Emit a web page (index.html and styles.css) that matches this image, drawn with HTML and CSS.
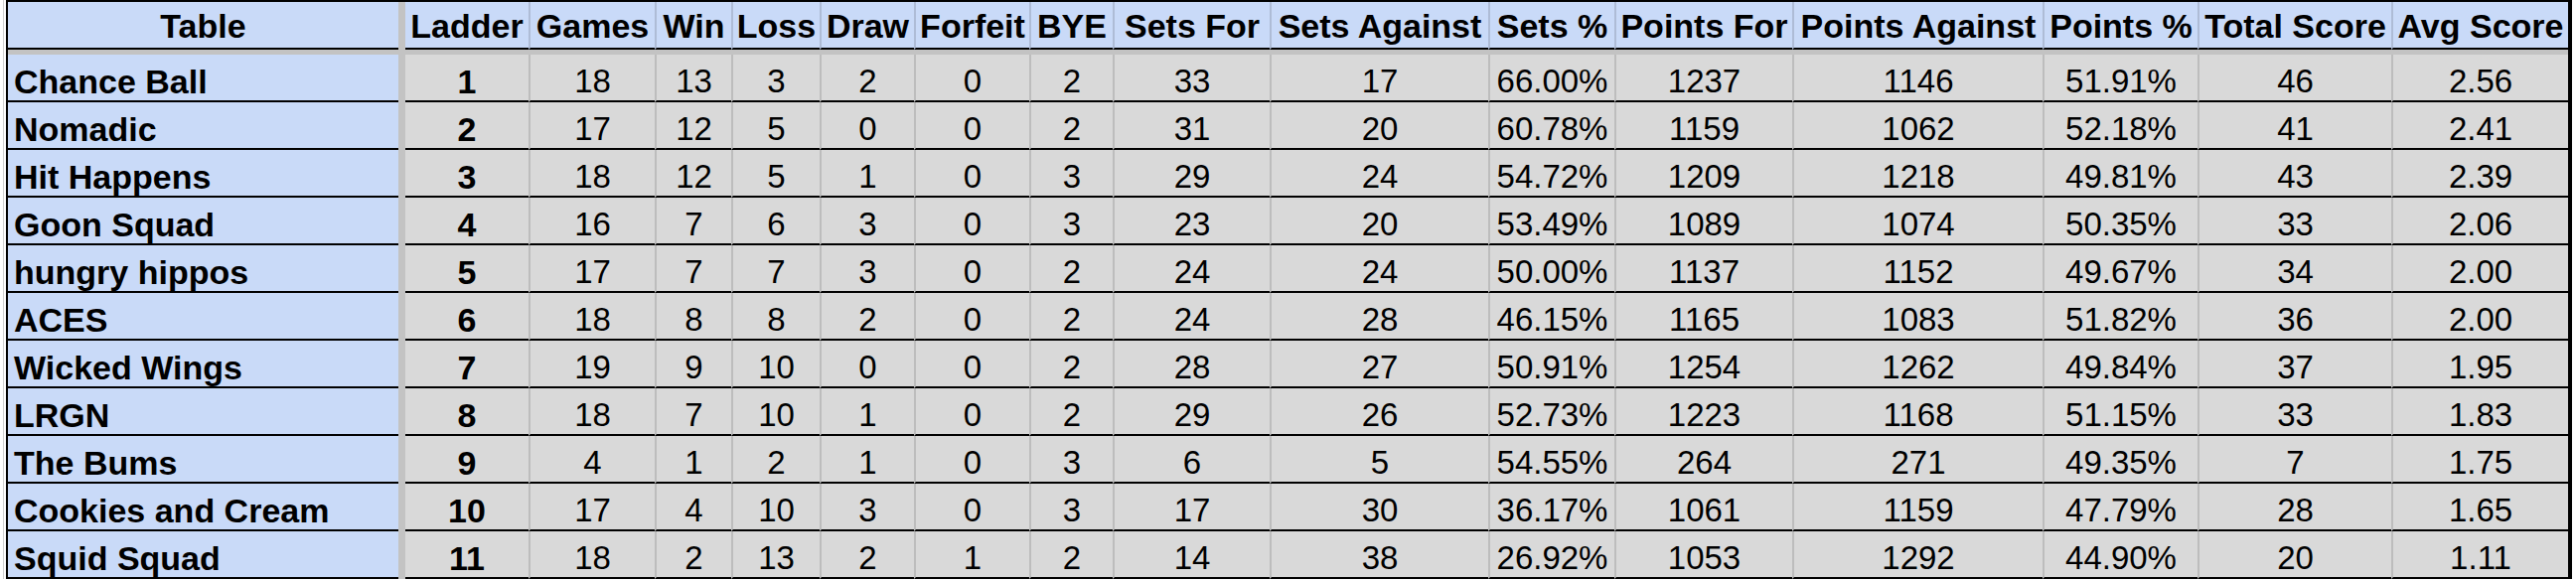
FILE: index.html
```html
<!DOCTYPE html>
<html lang="en">
<head>
<meta charset="utf-8">
<title>Ladder</title>
<link rel="stylesheet" href="styles.css">
</head>
<body>
<div class="page">
  <div class="ladder">
    <div class="freeze-col"></div>
    <div class="freeze-row"></div>

    <div class="hd name-hd">Table</div>
    <div class="hd first">Ladder</div>
    <div class="hd">Games</div>
    <div class="hd">Win</div>
    <div class="hd">Loss</div>
    <div class="hd">Draw</div>
    <div class="hd">Forfeit</div>
    <div class="hd">BYE</div>
    <div class="hd">Sets For</div>
    <div class="hd">Sets Against</div>
    <div class="hd">Sets %</div>
    <div class="hd">Points For</div>
    <div class="hd">Points Against</div>
    <div class="hd">Points %</div>
    <div class="hd">Total Score</div>
    <div class="hd">Avg Score</div>

    <div class="nm">Chance Ball</div><div class="c first rk">1</div><div class="c">18</div><div class="c">13</div><div class="c">3</div><div class="c">2</div><div class="c">0</div><div class="c">2</div><div class="c">33</div><div class="c">17</div><div class="c">66.00%</div><div class="c">1237</div><div class="c">1146</div><div class="c">51.91%</div><div class="c">46</div><div class="c">2.56</div>
    <div class="nm">Nomadic</div><div class="c first rk">2</div><div class="c">17</div><div class="c">12</div><div class="c">5</div><div class="c">0</div><div class="c">0</div><div class="c">2</div><div class="c">31</div><div class="c">20</div><div class="c">60.78%</div><div class="c">1159</div><div class="c">1062</div><div class="c">52.18%</div><div class="c">41</div><div class="c">2.41</div>
    <div class="nm">Hit Happens</div><div class="c first rk">3</div><div class="c">18</div><div class="c">12</div><div class="c">5</div><div class="c">1</div><div class="c">0</div><div class="c">3</div><div class="c">29</div><div class="c">24</div><div class="c">54.72%</div><div class="c">1209</div><div class="c">1218</div><div class="c">49.81%</div><div class="c">43</div><div class="c">2.39</div>
    <div class="nm">Goon Squad</div><div class="c first rk">4</div><div class="c">16</div><div class="c">7</div><div class="c">6</div><div class="c">3</div><div class="c">0</div><div class="c">3</div><div class="c">23</div><div class="c">20</div><div class="c">53.49%</div><div class="c">1089</div><div class="c">1074</div><div class="c">50.35%</div><div class="c">33</div><div class="c">2.06</div>
    <div class="nm">hungry hippos</div><div class="c first rk">5</div><div class="c">17</div><div class="c">7</div><div class="c">7</div><div class="c">3</div><div class="c">0</div><div class="c">2</div><div class="c">24</div><div class="c">24</div><div class="c">50.00%</div><div class="c">1137</div><div class="c">1152</div><div class="c">49.67%</div><div class="c">34</div><div class="c">2.00</div>
    <div class="nm">ACES</div><div class="c first rk">6</div><div class="c">18</div><div class="c">8</div><div class="c">8</div><div class="c">2</div><div class="c">0</div><div class="c">2</div><div class="c">24</div><div class="c">28</div><div class="c">46.15%</div><div class="c">1165</div><div class="c">1083</div><div class="c">51.82%</div><div class="c">36</div><div class="c">2.00</div>
    <div class="nm">Wicked Wings</div><div class="c first rk">7</div><div class="c">19</div><div class="c">9</div><div class="c">10</div><div class="c">0</div><div class="c">0</div><div class="c">2</div><div class="c">28</div><div class="c">27</div><div class="c">50.91%</div><div class="c">1254</div><div class="c">1262</div><div class="c">49.84%</div><div class="c">37</div><div class="c">1.95</div>
    <div class="nm">LRGN</div><div class="c first rk">8</div><div class="c">18</div><div class="c">7</div><div class="c">10</div><div class="c">1</div><div class="c">0</div><div class="c">2</div><div class="c">29</div><div class="c">26</div><div class="c">52.73%</div><div class="c">1223</div><div class="c">1168</div><div class="c">51.15%</div><div class="c">33</div><div class="c">1.83</div>
    <div class="nm">The Bums</div><div class="c first rk">9</div><div class="c">4</div><div class="c">1</div><div class="c">2</div><div class="c">1</div><div class="c">0</div><div class="c">3</div><div class="c">6</div><div class="c">5</div><div class="c">54.55%</div><div class="c">264</div><div class="c">271</div><div class="c">49.35%</div><div class="c">7</div><div class="c">1.75</div>
    <div class="nm">Cookies and Cream</div><div class="c first rk">10</div><div class="c">17</div><div class="c">4</div><div class="c">10</div><div class="c">3</div><div class="c">0</div><div class="c">3</div><div class="c">17</div><div class="c">30</div><div class="c">36.17%</div><div class="c">1061</div><div class="c">1159</div><div class="c">47.79%</div><div class="c">28</div><div class="c">1.65</div>
    <div class="nm">Squid Squad</div><div class="c first rk">11</div><div class="c">18</div><div class="c">2</div><div class="c">13</div><div class="c">2</div><div class="c">1</div><div class="c">2</div><div class="c">14</div><div class="c">38</div><div class="c">26.92%</div><div class="c">1053</div><div class="c">1292</div><div class="c">44.90%</div><div class="c">20</div><div class="c">1.11</div>
  </div>
</div>
</body>
</html>
```

FILE: styles.css
```css
html, body {
  margin: 0;
  padding: 0;
  background: #ffffff;
}

.page {
  margin-left: 3px;
  padding-left: 2px;
  border-left: 1px solid #cfcfcf;
  font-family: "Liberation Sans", Arial, sans-serif;
  color: #000;
}

.ladder {
  display: grid;
  width: max-content;
  grid-template-columns: 393px 7px 124px 127px 77px 89px 95px 116px 84px 158px 220px 127px 179px 252px 156px 195px 178px;
  grid-template-rows: 48px 5px repeat(11, 48px);
  border-top: 2px solid #000;
  border-left: 2px solid #000;
  border-right: 4px solid #000;
}

.freeze-col {
  grid-column: 2;
  grid-row: 1 / -1;
  background: #c3c3c3;
}

.freeze-row {
  grid-column: 1 / -1;
  grid-row: 2;
  background: #c3c3c3;
}

.hd, .nm, .c {
  box-sizing: border-box;
  display: flex;
  border-bottom: 2px solid #000;
  white-space: nowrap;
  overflow: hidden;
  line-height: 38px;
}

.hd {
  background: #c9daf8;
  font-weight: bold;
  font-size: 34px;
  align-items: center;
  justify-content: center;
  padding-top: 2px;
  border-left: 2px solid #aebcd6;
}

.hd.name-hd, .hd.first {
  border-left: 0;
}

.nm {
  background: #c9daf8;
  font-weight: bold;
  font-size: 34px;
  align-items: flex-end;
  padding-left: 6px;
}

.c {
  background: #d9d9d9;
  font-size: 33px;
  align-items: flex-end;
  justify-content: center;
  border-left: 2px solid #bdbdbd;
}

.c.first {
  border-left: 0;
}

.c.rk {
  font-weight: bold;
  font-size: 34px;
}
```
